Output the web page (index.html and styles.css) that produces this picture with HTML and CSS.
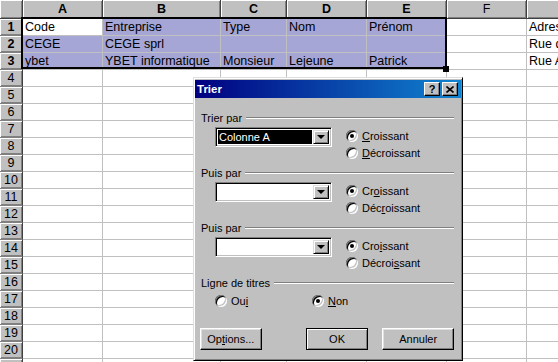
FILE: index.html
```html
<!DOCTYPE html>
<html lang="fr">
<head>
  <meta charset="UTF-8" />
  <meta name="viewport" content="width=device-width, initial-scale=1.0" />
  <title>Trier</title>
  <link rel="stylesheet" href="styles.css">
</head>
<body>
  <div class="sheet">
    <div class="row head">
      <div></div><div class="sel">A</div><div class="sel">B</div><div class="sel">C</div><div class="sel">D</div><div class="sel">E</div><div>F</div><div></div>
    </div>
    <div class="row">
      <div class="rh sel">1</div><div class="active">Code</div><div class="hl">Entreprise</div><div class="hl">Type</div><div class="hl">Nom</div><div class="hl">Prénom</div><div></div><div>Adresse</div>
    </div>
    <div class="row">
      <div class="rh sel">2</div><div class="hl">CEGE</div><div class="hl">CEGE sprl</div><div class="hl"></div><div class="hl"></div><div class="hl"></div><div></div><div>Rue de la Gare</div>
    </div>
    <div class="row">
      <div class="rh sel">3</div><div class="hl">ybet</div><div class="hl">YBET informatique</div><div class="hl">Monsieur</div><div class="hl">Lejeune</div><div class="hl">Patrick</div><div></div><div>Rue Albert</div>
    </div>
    <div class="row"><div class="rh">4</div><div></div><div></div><div></div><div></div><div></div><div></div><div></div></div>
    <div class="row"><div class="rh">5</div><div></div><div></div><div></div><div></div><div></div><div></div><div></div></div>
    <div class="row"><div class="rh">6</div><div></div><div></div><div></div><div></div><div></div><div></div><div></div></div>
    <div class="row"><div class="rh">7</div><div></div><div></div><div></div><div></div><div></div><div></div><div></div></div>
    <div class="row"><div class="rh">8</div><div></div><div></div><div></div><div></div><div></div><div></div><div></div></div>
    <div class="row"><div class="rh">9</div><div></div><div></div><div></div><div></div><div></div><div></div><div></div></div>
    <div class="row"><div class="rh">10</div><div></div><div></div><div></div><div></div><div></div><div></div><div></div></div>
    <div class="row"><div class="rh">11</div><div></div><div></div><div></div><div></div><div></div><div></div><div></div></div>
    <div class="row"><div class="rh">12</div><div></div><div></div><div></div><div></div><div></div><div></div><div></div></div>
    <div class="row"><div class="rh">13</div><div></div><div></div><div></div><div></div><div></div><div></div><div></div></div>
    <div class="row"><div class="rh">14</div><div></div><div></div><div></div><div></div><div></div><div></div><div></div></div>
    <div class="row"><div class="rh">15</div><div></div><div></div><div></div><div></div><div></div><div></div><div></div></div>
    <div class="row"><div class="rh">16</div><div></div><div></div><div></div><div></div><div></div><div></div><div></div></div>
    <div class="row"><div class="rh">17</div><div></div><div></div><div></div><div></div><div></div><div></div><div></div></div>
    <div class="row"><div class="rh">18</div><div></div><div></div><div></div><div></div><div></div><div></div><div></div></div>
    <div class="row"><div class="rh">19</div><div></div><div></div><div></div><div></div><div></div><div></div><div></div></div>
    <div class="row"><div class="rh">20</div><div></div><div></div><div></div><div></div><div></div><div></div><div></div></div>
    <div class="row"><div class="rh">21</div><div></div><div></div><div></div><div></div><div></div><div></div><div></div></div>

    <div class="selection"><span class="handle"></span></div>

    <div class="dialog">
      <div class="titlebar">
        <span class="title">Trier</span>
        <span class="tbtn help">?</span>
        <span class="tbtn close">
          <svg width="8" height="7" viewBox="0 0 8 7"><path d="M0.5 0.5 L7.5 6.5 M7.5 0.5 L0.5 6.5" stroke="#000" stroke-width="1.6" fill="none"/></svg>
        </span>
      </div>
      <div class="body">
        <div class="group first">
          <div class="legend">Trier par</div>
          <div class="line">
            <div class="combo"><span class="value picked">Colonne A</span><span class="drop"></span></div>
            <div class="choices">
              <label class="opt"><span class="radio on"></span><span><u>C</u>roissant</span></label>
              <label class="opt"><span class="radio"></span><span><u>D</u>écroissant</span></label>
            </div>
          </div>
        </div>
        <div class="group">
          <div class="legend">Puis par</div>
          <div class="line">
            <div class="combo"><span class="value"></span><span class="drop"></span></div>
            <div class="choices">
              <label class="opt"><span class="radio on"></span><span>Cr<u>o</u>issant</span></label>
              <label class="opt"><span class="radio"></span><span>Déc<u>r</u>oissant</span></label>
            </div>
          </div>
        </div>
        <div class="group">
          <div class="legend">Puis par</div>
          <div class="line">
            <div class="combo"><span class="value"></span><span class="drop"></span></div>
            <div class="choices">
              <label class="opt"><span class="radio on"></span><span>Cro<u>i</u>ssant</span></label>
              <label class="opt"><span class="radio"></span><span>Décroi<u>s</u>sant</span></label>
            </div>
          </div>
        </div>
        <div class="group">
          <div class="legend">Ligne de titres</div>
          <div class="titles">
            <label class="opt oui"><span class="radio"></span><span>Ou<u>i</u></span></label>
            <label class="opt"><span class="radio on"></span><span><u>N</u>on</span></label>
          </div>
        </div>
        <div class="buttons">
          <button class="options">Op<u>t</u>ions...</button>
          <button class="ok">OK</button>
          <button class="cancel">Annuler</button>
        </div>
      </div>
    </div>
  </div>
</body>
</html>
```

FILE: styles.css
```css
* {
  margin: 0;
  padding: 0;
  box-sizing: border-box;
}

body {
  font-family: "Liberation Sans", Arial, sans-serif;
  background: #fff;
  overflow: hidden;
}

.sheet {
  position: relative;
  width: 558px;
  overflow: hidden;
  font-size: 12.5px;
  color: #000;
}

.row {
  display: grid;
  grid-template-columns: 23px 80px 118px 66px 80px 80px 80px 80px;
  height: 17px;
}

.row > div {
  border-right: 1px solid #c0c0c0;
  border-bottom: 1px solid #c0c0c0;
  padding: 0 2px;
  line-height: 16px;
  white-space: nowrap;
  overflow: hidden;
}

.head {
  height: 19px;
}

.head > div,
.row > .rh {
  background: #c0c0c0;
  border-right: 1px solid #404040;
  border-bottom: 1px solid #404040;
  box-shadow: inset 1px 1px 0 #fff, inset -1px -1px 0 #808080;
  text-align: center;
  padding: 0;
}

.head > div {
  line-height: 18px;
}

.row > .rh {
  border-bottom-color: #808080;
}

.sel {
  font-weight: bold;
}

.row > .hl {
  background: #a5a6d6;
}

.row > .active {
  background: #fff;
}

.selection {
  position: absolute;
  left: 21px;
  top: 17px;
  width: 426px;
  height: 52px;
  border: 2px solid #000;
}

.handle {
  position: absolute;
  right: -4px;
  bottom: -5px;
  width: 6px;
  height: 6px;
  background: #000;
}

/* sort dialog */

.dialog {
  position: absolute;
  left: 193px;
  top: 77px;
  width: 270px;
  height: 284px;
  background: #c0c0c0;
  border: 1px solid;
  border-color: #dfdfdf #000 #000 #dfdfdf;
  box-shadow: inset 1px 1px 0 #fff, inset -1px -1px 0 #808080;
  padding: 2px 1px;
  font-size: 11px;
}

.titlebar {
  display: flex;
  align-items: center;
  height: 18px;
  padding: 0 3px 0 2px;
  background: linear-gradient(to right, #000080, #1084d0);
  color: #fff;
}

.title {
  flex: 1;
  font-weight: bold;
  font-size: 11.5px;
}

.tbtn {
  display: flex;
  align-items: center;
  justify-content: center;
  width: 16px;
  height: 14px;
  background: #c0c0c0;
  color: #000;
  border: 1px solid;
  border-color: #fff #000 #000 #fff;
  box-shadow: inset -1px -1px 0 #808080;
  font-weight: bold;
  font-size: 11px;
  line-height: 12px;
}

.help {
  margin-right: 2px;
}

.body {
  padding: 13px 7px 0 5px;
}

.group {
  margin-top: 5px;
}

.group.first {
  margin-top: 0;
}

.legend {
  display: flex;
  align-items: center;
  height: 14px;
  padding-left: 1px;
}

.legend::after {
  content: "";
  flex: 1;
  margin-left: 4px;
  border-top: 1px solid #808080;
  border-bottom: 1px solid #fff;
}

.line {
  display: flex;
  margin-top: 2px;
}

.combo {
  display: flex;
  width: 117px;
  height: 20px;
  margin-left: 15px;
  padding: 2px;
  background: #fff;
  border: 1px solid;
  border-color: #808080 #fff #fff #808080;
  box-shadow: inset 1px 1px 0 #000, inset -1px -1px 0 #c0c0c0;
}

.value {
  flex: 1;
  height: 14px;
  margin: 0 1px 0 0;
  line-height: 14px;
  padding-left: 1px;
  white-space: nowrap;
}

.value.picked {
  background: #000;
  color: #fff;
}

.drop {
  position: relative;
  width: 16px;
  height: 14px;
  background: #c0c0c0;
  border: 1px solid;
  border-color: #dfdfdf #000 #000 #dfdfdf;
  box-shadow: inset 1px 1px 0 #fff, inset -1px -1px 0 #808080;
}

.drop::after {
  content: "";
  position: absolute;
  left: 3px;
  top: 4px;
  border-left: 4px solid transparent;
  border-right: 4px solid transparent;
  border-top: 4px solid #000;
}

.choices {
  display: flex;
  flex-direction: column;
  margin-left: 14px;
}

.opt {
  display: flex;
  align-items: center;
  height: 17px;
  gap: 4px;
  white-space: nowrap;
}

.radio {
  position: relative;
  width: 12px;
  height: 12px;
  border-radius: 50%;
  background: #fff;
  box-shadow: inset 1px 1px 0 #808080, inset -1px -1px 0 #fff, inset 2px 2px 0 #000, inset -2px -2px 0 #c0c0c0;
}

.radio.on::after {
  content: "";
  position: absolute;
  left: 4px;
  top: 4px;
  width: 4px;
  height: 4px;
  border-radius: 50%;
  background: #000;
}

.titles {
  display: flex;
  margin: 2px 0 0 15px;
}

.oui {
  width: 97px;
}

.buttons {
  display: flex;
  margin-top: 19px;
}

button {
  height: 22px;
  background: #c0c0c0;
  border: 1px solid;
  border-color: #fff #000 #000 #fff;
  box-shadow: inset -1px -1px 0 #808080, inset 1px 1px 0 #dfdfdf;
  font-family: "Liberation Sans", Arial, sans-serif;
  font-size: 11px;
  color: #000;
}

.options {
  width: 62px;
}

.ok {
  width: 63px;
  margin-left: 44px;
  border-color: #000;
  box-shadow: inset 1px 1px 0 #fff, inset -1px -1px 0 #808080;
}

.cancel {
  width: 72px;
  margin-left: 14px;
}
```
